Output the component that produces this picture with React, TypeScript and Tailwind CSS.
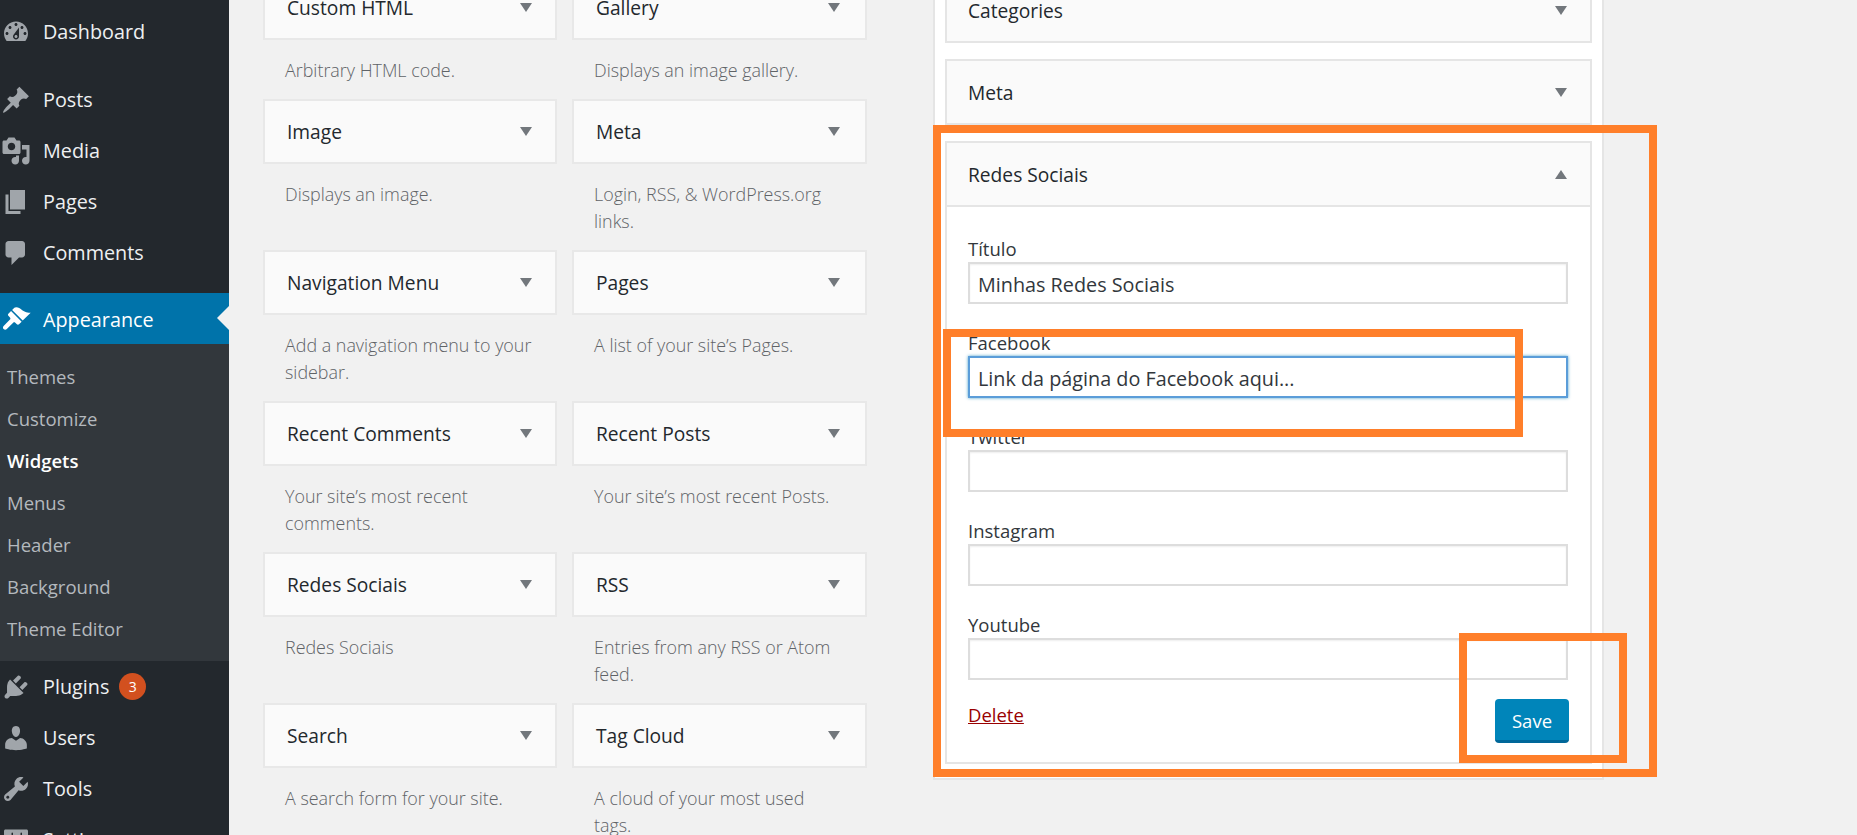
import { useState } from "react";

const icons: Record<string, string> = {
  dashboard:
    "M3.76 16h12.48c1.1-1.37 1.76-3.11 1.76-5 0-4.42-3.58-8-8-8s-8 3.58-8 8c0 1.89.66 3.63 1.76 5zM10 4c.55 0 1 .45 1 1s-.45 1-1 1-1-.45-1-1 .45-1 1-1zM6 6c.55 0 1 .45 1 1s-.45 1-1 1-1-.45-1-1 .45-1 1-1zm8 0c.55 0 1 .45 1 1s-.45 1-1 1-1-.45-1-1 .45-1 1-1zm-5.37 5.55L12 7v6c0 1.1-.9 2-2 2s-2-.9-2-2c0-.57.24-1.08.63-1.45zM4 10c.55 0 1 .45 1 1s-.45 1-1 1-1-.45-1-1 .45-1 1-1zm12 0c.55 0 1 .45 1 1s-.45 1-1 1-1-.45-1-1 .45-1 1-1zm-5 3c0-.55-.45-1-1-1s-1 .45-1 1 .45 1 1 1 1-.45 1-1z",
  posts:
    "M10.44 3.02l1.82-1.82 6.36 6.35-1.83 1.82c-1.05-.68-2.48-.57-3.41.36l-.75.75c-.92.93-1.04 2.35-.35 3.41l-1.83 1.82-2.41-2.41-2.8 2.79c-.42.42-3.38 2.71-3.8 2.29s1.86-3.39 2.28-3.81l2.79-2.79L4.1 9.36l1.83-1.82c1.05.69 2.48.57 3.41-.36l.75-.75c.93-.92 1.04-2.35.35-3.41z",
  media:
    "M13 11V4c0-.55-.45-1-1-1h-1.67L9 1H5L3.67 3H2c-.55 0-1 .45-1 1v7c0 .55.45 1 1 1h10c.55 0 1-.45 1-1zM7 4.5c1.38 0 2.5 1.12 2.5 2.5S8.38 9.5 7 9.5 4.5 8.38 4.5 7 5.62 4.5 7 4.5zM14 6h5v10.5c0 1.38-1.12 2.5-2.5 2.5S14 17.88 14 16.5s1.12-2.5 2.5-2.5c.17 0 .34.02.5.05V9h-3V6zm-4 8.05V13h2v3.5c0 1.38-1.12 2.5-2.5 2.5S7 17.88 7 16.5 8.12 14 9.5 14c.17 0 .34.02.5.05z",
  pages: "M6 15V2h10v13H6zm-1 1h8v2H3V5h2v11z",
  comments:
    "M5 2h9c1.1 0 2 .9 2 2v7c0 1.1-.9 2-2 2h-2l-5 5v-5H5c-1.1 0-2-.9-2-2V4c0-1.1.9-2 2-2z",
  appearance:
    "M14.48 11.06L7.41 3.99l1.5-1.5c.5-.56 2.3-.47 3.51.32 1.21.8 1.43 1.28 2.91 2.1 1.18.64 2.45 1.26 4.45.85zm-.71.71L6.7 4.7 4.93 6.47c-.39.39-.39 1.02 0 1.41l1.06 1.06c.39.39.39 1.03 0 1.42l-4.24 4.24c-.59.59-.59 1.54 0 2.12.59.59 1.54.59 2.12 0l4.24-4.24c.39-.39 1.03-.39 1.42 0l1.06 1.06c.39.39 1.02.39 1.41 0z",
  plugins:
    "M13.11 4.36L9.87 7.6 8 5.73l3.24-3.24c.35-.34 1.05-.2 1.56.32.52.51.66 1.21.31 1.55zm-8 1.77l.91-1.12 9.01 9.01-1.19.84c-.71.71-2.63 1.16-3.82 1.16H6.14L4.9 17.26c-.59.59-1.54.59-2.12 0-.59-.58-.59-1.53 0-2.12l1.24-1.24v-3.88c0-1.13.4-3.19 1.09-3.89zm7.26 3.97l3.24-3.24c.34-.35 1.04-.21 1.55.31.52.51.66 1.21.31 1.55l-3.24 3.25z",
  users:
    "M10 9.25c-2.27 0-2.73-3.44-2.73-3.44C7 4.02 7.82 2 9.97 2c2.16 0 2.98 2.02 2.71 3.81 0 0-.41 3.44-2.68 3.44zm0 2.57L12.72 10c2.39 0 4.52 2.33 4.52 4.53v2.49s-3.65 1.13-7.24 1.13c-3.65 0-7.24-1.13-7.24-1.13v-2.49c0-2.25 1.94-4.48 4.47-4.48z",
  tools:
    "M16.68 9.77c-1.34 1.34-3.3 1.67-4.95.99l-5.41 6.52c-.99.99-2.59.99-3.58 0s-.99-2.59 0-3.57l6.52-5.42c-.68-1.65-.35-3.61.99-4.95 1.28-1.28 3.12-1.62 4.72-1.06l-2.89 2.89 2.82 2.82 2.86-2.87c.53 1.58.18 3.39-1.08 4.65zM3.81 16.21c.4.39 1.04.39 1.43 0 .4-.4.4-1.04 0-1.43-.39-.4-1.03-.4-1.43 0-.39.39-.39 1.03 0 1.43z",
  settings:
    "M18 16V4c0-.55-.45-1-1-1H3c-.55 0-1 .45-1 1v12c0 .55.45 1 1 1h14c.55 0 1-.45 1-1zM8 11h1c.55 0 1 .45 1 1s-.45 1-1 1H8v1.5c0 .28-.22.5-.5.5s-.5-.22-.5-.5V13H6c-.55 0-1-.45-1-1s.45-1 1-1h1V5.5c0-.28.22-.5.5-.5s.5.22.5.5V11zm5-2h-1c-.55 0-1-.45-1-1s.45-1 1-1h1V5.5c0-.28.22-.5.5-.5s.5.22.5.5V7h1c.55 0 1 .45 1 1s-.45 1-1 1h-1v5.5c0 .28-.22.5-.5.5s-.5-.22-.5-.5V9z",
};

const submenu = ["Themes", "Customize", "Widgets", "Menus", "Header", "Background", "Theme Editor"];

const widgets = [
  { title: "Custom HTML", desc: "Arbitrary HTML code." },
  { title: "Gallery", desc: "Displays an image gallery." },
  { title: "Image", desc: "Displays an image." },
  { title: "Meta", desc: "Login, RSS, & WordPress.org\nlinks." },
  { title: "Navigation Menu", desc: "Add a navigation menu to your\nsidebar." },
  { title: "Pages", desc: "A list of your site’s Pages." },
  { title: "Recent Comments", desc: "Your site’s most recent\ncomments." },
  { title: "Recent Posts", desc: "Your site’s most recent Posts." },
  { title: "Redes Sociais", desc: "Redes Sociais" },
  { title: "RSS", desc: "Entries from any RSS or Atom\nfeed." },
  { title: "Search", desc: "A search form for your site." },
  { title: "Tag Cloud", desc: "A cloud of your most used\ntags." },
];

function MenuItem({ icon, label, active, badge }: { icon: string; label: string; active?: boolean; badge?: string }) {
  return (
    <div className={`relative flex h-[51px] items-center ${active ? "bg-[#0073aa] text-white" : "text-[#eef0f2]"}`}>
      <svg viewBox="0 0 20 20" className={`ml-px h-[30px] w-[30px] shrink-0 ${active ? "fill-white" : "fill-[#a0a5aa]"}`}>
        <path fillRule="evenodd" d={icons[icon]} />
      </svg>
      <span className={`ml-[12px] text-[19.8px] ${active ? "pt-[2px]" : ""}`}>{label}</span>
      {badge && (
        <span className="ml-[10px] flex h-[27px] w-[27px] items-center justify-center rounded-full bg-[#d2501f] text-[14px] text-white">
          {badge}
        </span>
      )}
      {active && (
        <span className="absolute right-0 top-[13px] h-0 w-0 border-y-[12px] border-r-[12px] border-y-transparent border-r-[#f1f1f1]" />
      )}
    </div>
  );
}

function Sidebar() {
  return (
    <aside className="h-full w-[229px] shrink-0 bg-[#23282d] pt-[6px]">
      <MenuItem icon="dashboard" label="Dashboard" />
      <div className="mt-[17px]">
        <MenuItem icon="posts" label="Posts" />
        <MenuItem icon="media" label="Media" />
        <MenuItem icon="pages" label="Pages" />
        <MenuItem icon="comments" label="Comments" />
      </div>
      <div className="mt-[15px]">
        <MenuItem icon="appearance" label="Appearance" active />
      </div>
      <div className="bg-[#32373c] pb-[11px] pt-[12px]">
        {submenu.map((item) => (
          <div
            key={item}
            className={`flex h-[42px] items-center pl-[7px] text-[18.5px] ${
              item === "Widgets" ? "font-semibold text-white" : "text-[#b4b9be]"
            }`}
          >
            {item}
          </div>
        ))}
      </div>
      <MenuItem icon="plugins" label="Plugins" badge="3" />
      <MenuItem icon="users" label="Users" />
      <MenuItem icon="tools" label="Tools" />
      <MenuItem icon="settings" label="Settings" />
    </aside>
  );
}

function Arrow({ up }: { up?: boolean }) {
  return (
    <span
      className={`h-0 w-0 border-x-[6.5px] border-x-transparent ${
        up ? "border-b-[9px] border-b-[#72777c]" : "border-t-[9px] border-t-[#72777c]"
      }`}
    />
  );
}

function WidgetCard({ title, desc, second }: { title: string; desc: string; second: boolean }) {
  return (
    <div>
      <div
        className={`flex h-[65px] items-center justify-between border-2 border-[#e8e8e8] bg-[#fafafa] pl-[22px] ${
          second ? "pr-[25px]" : "pr-[23px]"
        }`}
      >
        <span className="pt-[2px] text-[19.2px] font-medium text-[#23282d]">{title}</span>
        <Arrow />
      </div>
      <p className="mb-[15px] mt-[17px] whitespace-pre-line pl-[22px] text-[17.9px] font-light leading-[27px] text-[#5f6367]">
        {desc}
      </p>
    </div>
  );
}

function SidebarHeader({ title, up }: { title: string; up?: boolean }) {
  return (
    <div
      className={`flex items-center justify-between bg-[#fafafa] pl-[21px] pr-[23px] ${
        up ? "h-[64px] border-b-2 border-[#e5e5e5]" : "h-[62px]"
      }`}
    >
      <span className="pt-[3px] text-[19.2px] font-medium text-[#23282d]">{title}</span>
      <Arrow up={up} />
    </div>
  );
}

function Field({ label, value, focus }: { label: string; value?: string; focus?: boolean }) {
  const [text, setText] = useState(value ?? "");
  return (
    <label className="block">
      <span className="block text-[18.5px] leading-[27px] text-[#32373c]">{label}</span>
      <input
        value={text}
        onChange={(e) => setText(e.target.value)}
        className={`block h-[42px] w-[600px] border-2 bg-white px-[8px] pt-[2px] text-[19.8px] text-[#32373c] outline-none ${
          focus ? "border-[#5b9dd9] shadow-[0_0_3px_rgba(30,140,190,.8)]" : "border-[#ddd] shadow-[inset_0_1px_2px_rgba(0,0,0,.07)]"
        }`}
      />
    </label>
  );
}

export default function App() {
  return (
    <main className="relative flex h-screen w-screen overflow-hidden bg-[#f1f1f1] font-['Open_Sans',sans-serif]">
      <Sidebar />

      <section className="ml-[34px] mt-[-25px] grid grid-cols-[294px_295px] content-start gap-x-[15px]">
        {widgets.map((w, i) => (
          <WidgetCard key={w.title} title={w.title} desc={w.desc} second={i % 2 === 1} />
        ))}
      </section>

      <section className="ml-[66px] mt-[-35px] h-[815px] w-[671px] shrink-0 border-x-2 border-b-2 border-[#e5e5e5] bg-white px-[10px] pt-[12px]">
        <div className="border-2 border-[#e5e5e5]">
          <SidebarHeader title="Categories" />
        </div>
        <div className="mt-[16px] border-2 border-[#e5e5e5]">
          <SidebarHeader title="Meta" />
        </div>
        <div className="mt-[16px] border-2 border-[#e5e5e5]">
          <SidebarHeader title="Redes Sociais" up />
          <div className="px-[21px] pb-[19px] pt-[28px]">
            <div className="flex flex-col gap-[25px]">
              <Field label="Título" value="Minhas Redes Sociais" />
              <Field label="Facebook" value="Link da página do Facebook aqui..." focus />
              <Field label="Twitter" />
              <Field label="Instagram" />
              <Field label="Youtube" />
            </div>
            <div className="mt-[19px] flex items-start justify-between">
              <a className="mt-[2px] text-[18.5px] leading-[27px] text-[#990000] underline">Delete</a>
              <button className="h-[44px] w-[74px] rounded-[4px] border-b-[3px] border-[#006799] bg-[#0085ba] pt-[2px] text-[18.5px] text-white">
                Save
              </button>
            </div>
          </div>
        </div>
      </section>

      <div className="absolute left-[933px] top-[125px] h-[652px] w-[724px] border-8 border-[#ff7f2a]" />
      <div className="absolute left-[943px] top-[329px] h-[108px] w-[580px] border-8 border-[#ff7f2a]" />
      <div className="absolute left-[1459px] top-[633px] h-[130px] w-[168px] border-8 border-[#ff7f2a]" />
    </main>
  );
}
